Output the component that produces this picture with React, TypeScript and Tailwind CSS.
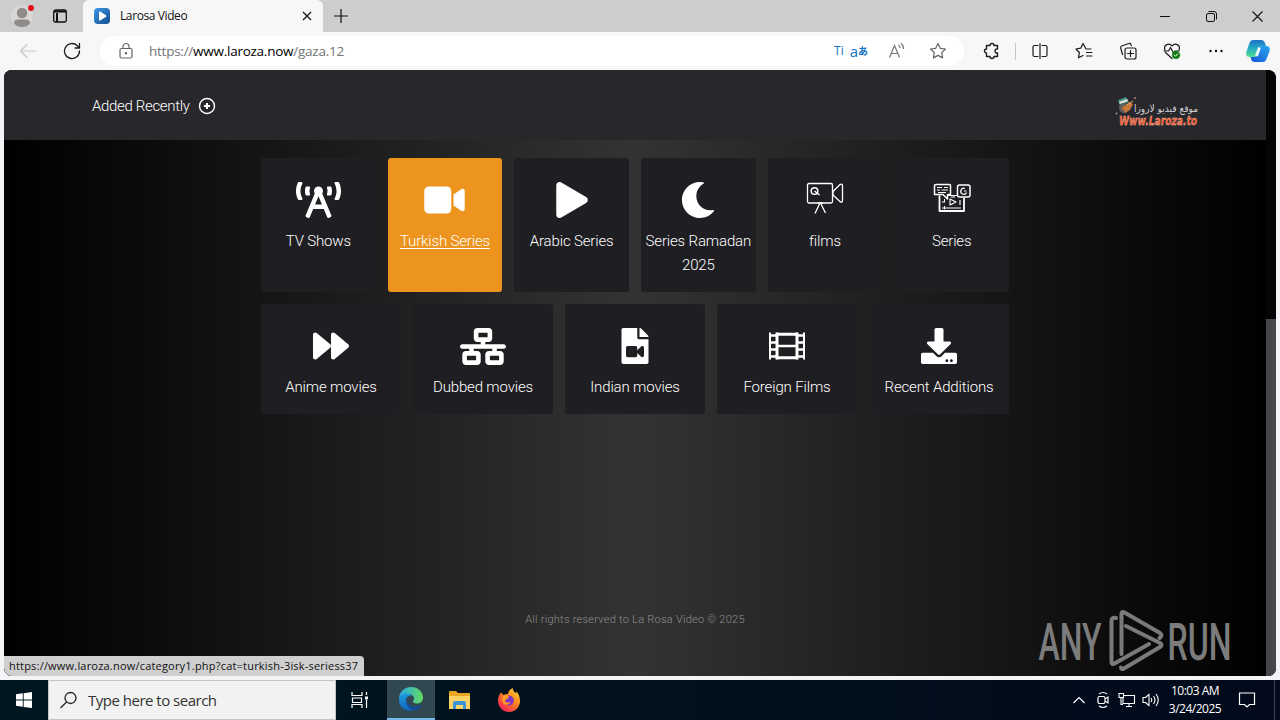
import React from 'react';
import {
  FaBroadcastTower,
  FaPlay,
  FaMoon,
  FaForward,
  FaDownload,
  FaFileVideo,
} from 'react-icons/fa';
import { FaVideo, FaNetworkWired } from 'react-icons/fa6';

interface Category {
  title: string;
  icon: React.ReactNode;
  active?: boolean;
}

const FilmsIcon: React.FC = () => (
  <svg width="38" height="36" viewBox="0 0 38 36" fill="none" stroke="white" strokeWidth="1.3" strokeLinejoin="round">
    <rect x="1.5" y="1.5" width="25" height="19.5" rx="1.5" />
    <path d="M27 9.5 34 2.5Q36.500 1.500 36.500 4V18Q36.500 21 34.500 20L27 13Z" />
    <circle cx="8.500" cy="9" r="3.300" strokeWidth="1.500" />
    <path d="m8.500 9 5 4" strokeWidth="1.500" />
    <path d="m13.500 22-4.500 9.500M15 22l4.500 9M12 21h5" />
  </svg>
);

const SeriesIcon: React.FC = () => (
  <svg width="38" height="36" viewBox="0 0 38 36" fill="none" stroke="white" strokeWidth="1.300" strokeLinejoin="round">
    <path d="M1.500 3.500Q1.500 2.500 3 2.500H16.500Q17.500 2.500 17.500 3.500V12.500H14.500V17L10 12.500H1.500Z" strokeWidth="1.500" />
    <path d="M4 5.500h5M11 5.500h4M4 8h3M8.500 8H15M5 10.500h8" strokeWidth="1" />
    <rect x="24.500" y="3" width="12.500" height="12" rx="2" strokeWidth="1.500" />
    <path d="M32 6.500a3 3 0 1 0 1.500 4M31 9h2.500" strokeWidth="1.200" />
    <path d="M6.500 13.500V29H31V16" strokeWidth="1.800" />
    <path d="M15 13.500h9M9 26h19M11.500 24v3.500M9 20h2.500V17M27 18v5M18 15h4" strokeWidth="1.100" />
    <path d="M17 17v6l6-3Z" strokeWidth="1.100" />
  </svg>
);

const FilmStripIcon: React.FC = () => (
  <svg width="36" height="36" viewBox="0 0 36 36" fill="none" stroke="white">
    <path d="M1 4.500v27M35 4.500v27" strokeWidth="2" />
    <path d="M8 4.500v27M28 4.500v27" strokeWidth="3" />
    <path d="M7 6.200h22M7 29.800h22" strokeWidth="3" />
    <path d="M8 18h20" strokeWidth="2.500" />
    <path d="M1 7.500h7M1 14.500h7M1 21.500h7M1 28.500h7M28 7.500h7M28 14.500h7M28 21.500h7M28 28.500h7" strokeWidth="2.300" />
  </svg>
);

const topRow: Category[] = [
  { title: 'TV Shows', icon: <FaBroadcastTower className="h-9 w-[45px]" /> },
  { title: 'Turkish Series', icon: <FaVideo className="h-9 w-[41px]" />, active: true },
  { title: 'Arabic Series', icon: <FaPlay /> },
  { title: 'Series Ramadan 2025', icon: <FaMoon /> },
  { title: 'films', icon: <FilmsIcon /> },
  { title: 'Series', icon: <SeriesIcon /> },
];

const bottomRow: Category[] = [
  { title: 'Anime movies', icon: <FaForward /> },
  { title: 'Dubbed movies', icon: <FaNetworkWired className="mt-px h-[37px] w-[46px]" /> },
  { title: 'Indian movies', icon: <FaFileVideo /> },
  { title: 'Foreign Films', icon: <FilmStripIcon /> },
  { title: 'Recent Additions', icon: <FaDownload /> },
];

const CategoryCard: React.FC<{ category: Category }> = ({ category }) => (
  <a
    className={`flex flex-col items-center rounded-[3px] pt-6 text-center text-white ${
      category.active ? 'bg-[#ed941e] underline underline-offset-2' : 'bg-[#1f1e22]'
    }`}
  >
    <div className="flex h-9 items-center justify-center text-[36px]">{category.icon}</div>
    <span className="mt-[11px] px-1 text-[15px] leading-6 font-light tracking-[-0.15px]">{category.title}</span>
  </a>
);

const TabBar: React.FC = () => (
  <div className="flex h-8 items-center bg-[#cdcdcd]">
    <div className="flex w-[83px] items-center">
      <div className="flex w-11 justify-center">
        <svg width="26" height="26" viewBox="0 0 26 26">
          <circle cx="13" cy="13" r="11" fill="#d9d7d5" />
          <circle cx="13" cy="10" r="5.200" fill="#8f8b88" />
          <path d="M5 20.500Q5 16.500 9 16.500h8q4 0 4 4-3 3.500-8 3.500t-8-3.500Z" fill="#8f8b88" />
          <circle cx="22" cy="5" r="3" fill="#e0101c" />
        </svg>
      </div>
      <div className="flex w-8 justify-center">
        <svg width="16" height="16" viewBox="0 0 16 16" fill="none" stroke="#111" strokeWidth="1.300">
          <rect x="1.700" y="2" width="12.600" height="12" rx="2" />
          <path d="M2 3.500h12M5 5v9" strokeWidth="2" />
        </svg>
      </div>
    </div>
    <div className="flex h-8 w-60 items-center rounded-t-md bg-[#f7f7f7] pr-2 pl-[11px]">
      <svg width="16" height="16" viewBox="0 0 16 16">
        <defs>
          <linearGradient id="fav" x1="0" y1="0" x2="1" y2="1">
            <stop offset="0" stopColor="#3d9ae8" />
            <stop offset="1" stopColor="#114b8f" />
          </linearGradient>
        </defs>
        <rect width="16" height="16" rx="4" fill="url(#fav)" />
        <path d="M5 4.300Q5 3 6.200 3.600L12 7.200q1 .8 0 1.600L6.200 12.400Q5 13 5 11.700Z" fill="white" />
      </svg>
      <span className="ml-[10px] flex-1 text-[12px] tracking-[-0.4px] text-[#111]">Larosa Video</span>
      <svg width="16" height="16" viewBox="0 0 16 16" stroke="#111" strokeWidth="1.200">
        <path d="m4 4 8 8M12 4l-8 8" />
      </svg>
    </div>
    <div className="flex w-9 justify-center">
      <svg width="14" height="14" viewBox="0 0 14 14" stroke="#111" strokeWidth="1.200">
        <path d="M7 0v14M0 7h14" />
      </svg>
    </div>
    <div className="ml-auto flex items-center">
      <div className="flex w-[46px] justify-center">
        <svg width="10" height="10" viewBox="0 0 10 10" stroke="#111"><path d="M0 5.500h10" /></svg>
      </div>
      <div className="flex w-[46px] justify-center">
        <svg width="11" height="11" viewBox="0 0 11 11" fill="none" stroke="#111">
          <rect x=".5" y="2.500" width="8" height="8" rx="1.500" />
          <path d="M2.500.5H8Q10.500.5 10.500 3v5.500" />
        </svg>
      </div>
      <div className="flex w-[46px] justify-center">
        <svg width="11" height="11" viewBox="0 0 11 11" stroke="#111" strokeWidth="1.100">
          <path d="m.5.5 10 10M10.500.5l-10 10" />
        </svg>
      </div>
    </div>
  </div>
);

const ToolIcon: React.FC<{ children: React.ReactNode }> = ({ children }) => (
  <div className="flex w-11 shrink-0 justify-center">
    <svg width="18" height="18" viewBox="0 0 18 18" fill="none" stroke="#1b1b1b" strokeWidth="1.200" strokeLinejoin="round" strokeLinecap="round">
      {children}
    </svg>
  </div>
);

const Toolbar: React.FC = () => (
  <div className="flex h-[38px] items-center bg-[#f7f7f7]">
    <div className="flex w-[100px] pl-[6px]">
      <ToolIcon>
        <path d="M16.500 9H1.500M8 2.500 1.500 9 8 15.500" stroke="#c8c8c8" />
      </ToolIcon>
      <ToolIcon>
        <path d="M16.500 9a7.500 7.500 0 1 1-2.200-5.300L16.500 6M16.500 1.500V6H12" strokeWidth="1.300" />
      </ToolIcon>
    </div>
    <div className="flex h-[30px] w-[864px] items-center rounded-full bg-white pr-[5px] pl-1">
      <ToolIcon>
        <g stroke="#666">
          <rect x="3" y="6.500" width="12" height="9.500" rx="1.500" />
          <path d="M6 6.500V4.500a3 3 0 0 1 6 0v2" />
          <circle cx="9" cy="11.200" r=".6" fill="#666" />
        </g>
      </ToolIcon>
      <span className="ml-[1px] flex-1 text-[13.5px] leading-5 tracking-[-0.25px] text-[#737373]">
        https://<span className="text-black">www.laroza.now</span>/gaza.12
      </span>
      <div className="mr-[9px] flex items-center gap-[6px] text-[#1272c4]">
        <span className="text-[12px]">Ti</span>
        <span className="flex items-center text-[15px] leading-4">
          a<span className="text-[10px] font-bold">あ</span>
        </span>
      </div>
      <div className="flex w-10 justify-center">
        <svg width="18" height="18" viewBox="0 0 18 18" fill="none" stroke="#777" strokeWidth="1.200">
          <path d="m1.500 15.500 5-12 5 12M3.200 11.500h6.600M10.500 3q1.500 1 1.500 3M13 1.500q2.800 2 2.500 5.500" />
        </svg>
      </div>
      <div className="flex w-[42px] justify-center">
        <svg width="18" height="18" viewBox="0 0 18 18" fill="none" stroke="#666" strokeWidth="1.200" strokeLinejoin="round">
          <path d="m9 1.500 2.300 4.800 5.200.7-3.800 3.600.9 5.300L9 13.400l-4.600 2.500.9-5.300L1.500 7l5.200-.7Z" />
        </svg>
      </div>
    </div>
    <div className="flex flex-1 items-center pl-[6px]">
      <ToolIcon>
        <path d="M3.500 3.500H7a2 2 0 0 1 4 0h3.500V7q-2.500-.2-2.500 2t2.500 2v3.500H11a2 2 0 0 1-4 0H3.500V11a2 2 0 1 1 0-4Z" strokeWidth="1.400" />
      </ToolIcon>
      <div className="ml-px h-[17px] w-px bg-[#c4c4c4]" />
      <div className="ml-[2px] flex">
        <ToolIcon>
          <path d="M7 3.500H3.500Q2 3.500 2 5v8q0 1.500 1.500 1.500H7M11 3.500h3.500Q16 3.500 16 5v8q0 1.500-1.500 1.500H11M9 1.500v15" />
        </ToolIcon>
        <ToolIcon>
          <path d="M16 7H11L8 1.500 5.700 6.200.9 7l3.500 3.500-.9 5.300L8 13.500M11.500 10.500H17M11.500 14H17" />
        </ToolIcon>
        <ToolIcon>
          <rect x="6" y="6" width="11" height="11" rx="2" />
          <path d="M11.500 8.500v6M8.500 11.500h6M3.500 12.500 1.700 6q-.3-1.500 1-2L10 1.500q1.500-.3 2 1l.3 1.200" />
        </ToolIcon>
        <ToolIcon>
          <path d="M2 8C0 3 6 0 9 4c3-4 9-1 7 4M2.500 10.500 9 16.500M1 9h4.500L7.500 5.500l3 5.500 1.500-2h4" />
          <circle cx="13" cy="13" r="3.800" fill="#107c10" stroke="#107c10" strokeWidth=".5" />
          <path d="m11.200 13 1.300 1.300 2.300-2.500" stroke="white" strokeWidth="1" />
        </ToolIcon>
        <ToolIcon>
          <g fill="#111" stroke="none">
            <circle cx="3.500" cy="9" r="1.200" /><circle cx="9" cy="9" r="1.200" /><circle cx="14.500" cy="9" r="1.200" />
          </g>
        </ToolIcon>
      </div>
      <svg className="ml-[7px] shrink-0" width="26" height="24" viewBox="0 0 26 24">
        <defs>
          <linearGradient id="cpa" x1="0" y1="0" x2="0" y2="1">
            <stop offset="0" stopColor="#1f72c9" />
            <stop offset=".45" stopColor="#22a6c4" />
            <stop offset="1" stopColor="#52e08d" />
          </linearGradient>
          <linearGradient id="cpb" x1="1" y1="0" x2="0" y2="1">
            <stop offset="0" stopColor="#2aa9ea" />
            <stop offset="1" stopColor="#1652d8" />
          </linearGradient>
        </defs>
        <path d="M8 1h8.500q2.500 0 3.300 2.500L21 7h-4q-2 0-2.600 2l-2 6.500q-.8 2.500-3.400 2.500H5Q0 18 1.500 12.500L4.500 4Q5.500 1 8 1Z" fill="url(#cpa)" />
        <path d="M18 23H9.500Q7 23 6.200 20.500L5.500 18H9q2.600 0 3.400-2.500l2-6.500Q15 7 17 7h4q5 0 3.500 5.500l-3 7.500q-1 3-3.500 3Z" fill="url(#cpb)" />
        <path d="M14.500 8.500 11.500 17" stroke="#e7f7ff" strokeWidth="3" />
      </svg>
    </div>
  </div>
);

const SiteLogo: React.FC = () => (
  <svg className="overflow-visible" width="88" height="36" viewBox="0 0 88 36">
    <path d="M4 5 12 2l3 5-9 4Z" fill="#3d8f82" />
    <path d="m5 7 8-3 1 2-8 3Z" fill="#e5e2da" />
    <circle cx="10" cy="13" r="5" fill="#5b6062" />
    <circle cx="10" cy="13" r="2.500" fill="#9c6a42" />
    <path d="m9 13 6-6 4 2-3 6-5 3Z" fill="#c7783a" />
    <path d="m13 10 6-4" stroke="#f0b067" />
    <circle cx="2.500" cy="18.500" r="1" fill="#8ba0a4" />
    <circle cx="21" cy="3" r="1" fill="#b4847a" />
    <text x="84" y="17" textAnchor="end" textLength="64" lengthAdjust="spacingAndGlyphs" fontSize="10" fill="#d4d4d6" fontFamily="DejaVu Sans, sans-serif">
      موقع فيديو لاروزا
    </text>
    <text x="5" y="30" textLength="78" lengthAdjust="spacingAndGlyphs" fontSize="12" fontWeight="bold" fontStyle="italic" fill="#f4572c" stroke="#f6c6b2" strokeWidth=".35" fontFamily="DejaVu Sans, sans-serif">
      Www.Laroza.to
    </text>
  </svg>
);

const Watermark: React.FC = () => (
  <svg className="absolute top-[538px] left-[1034px] overflow-visible" width="196" height="66" viewBox="0 0 196 66" fill="none">
    <g fill="#7c7c7c" fontFamily="Roboto, sans-serif" fontSize="52" fontWeight="500">
      <text x="0.500" y="51.500" textLength="63" lengthAdjust="spacingAndGlyphs">ANY</text>
      <text x="129.500" y="51.500" textLength="64" lengthAdjust="spacingAndGlyphs">RUN</text>
    </g>
    <g stroke="#7a7a7a" strokeWidth="4" strokeLinecap="round" strokeLinejoin="round">
      <path d="M78 10q-4.500-1-4.500 3V54q0 3 3 1.500L111 36" />
      <path d="M83.500 46V6q0-3 3-1.500L122 25q3 2.500-.5 5" />
      <path d="m88 18 34 17q3 2 0 4L86 60.500q-2.500 1.500-3-1" />
    </g>
  </svg>
);

const SitePage: React.FC = () => (
  <div className="relative flex h-[606px] overflow-hidden rounded-lg bg-black">
    <div className="flex flex-1 flex-col bg-linear-to-r/srgb from-black via-[#333333] to-black font-['Roboto','Liberation_Sans',sans-serif]">
      <header className="flex h-[70px] items-center justify-between bg-[#28272c] pr-[64px] pl-[88px] text-white">
        <a className="mt-[2px] flex items-center gap-2 text-[15px] font-light">
          <span className="tracking-[-0.33px]">Added Recently</span>
          <svg className="-mt-px" width="18" height="18" viewBox="0 0 18 18" fill="none" stroke="white" strokeWidth="1.400">
            <circle cx="9" cy="9" r="7.500" />
            <path d="M9 6v6M6 9h6" strokeWidth="2" />
          </svg>
        </a>
        <div className="mt-[15px]">
          <SiteLogo />
        </div>
      </header>
      <main className="mx-auto mt-[18px] flex w-[748px] flex-col gap-3">
        <div className="grid h-[134px] grid-cols-6 gap-3">
          {topRow.map((category) => (
            <CategoryCard key={category.title} category={category} />
          ))}
        </div>
        <div className="grid h-[110px] grid-cols-5 gap-3">
          {bottomRow.map((category) => (
            <CategoryCard key={category.title} category={category} />
          ))}
        </div>
      </main>
      <footer className="mt-auto mb-[47px] text-center text-[11px] leading-[18px] font-light tracking-[0.26px] text-[#8f8f8f]">
        All rights reserved to La Rosa Video © 2025
      </footer>
    </div>
    {/* Scrollbar */}
    <div className="flex w-[10px] flex-col justify-end bg-[#050505]">
      <div className="h-[357px] bg-[#46454c]" />
    </div>
    <div className="absolute bottom-0 left-0 h-5 w-[360px] rounded-tr-[4px] bg-[#cfcfcf] pl-[5px] text-[11px] leading-5 tracking-[0.2px] whitespace-nowrap text-[#111]">
      https://www.laroza.now/category1.php?cat=turkish-3isk-seriess37
    </div>
    <Watermark />
  </div>
);

const Taskbar: React.FC = () => (
  <div className="flex h-10 items-center bg-linear-to-r from-[#00171f] to-[#020a1b] text-white">
    <div className="flex w-12 justify-center">
      <svg width="16" height="16" viewBox="0 0 16 16" fill="white">
        <path d="m0 2.300 6.800-1v6.300H0ZM7.700 1.200 16 0v7.600H7.700ZM0 8.500h6.800v6.300L0 13.800ZM7.700 8.500H16V16l-8.300-1.100Z" />
      </svg>
    </div>
    <div className="flex h-10 w-72 items-center border border-[#c5c5c5] bg-[#f2f2f2] pl-[11px] text-[#333]">
      <svg width="18" height="18" viewBox="0 0 18 18" fill="none" stroke="#222" strokeWidth="1.300">
        <circle cx="10.500" cy="7" r="5.500" />
        <path d="m6.500 11-6 6" />
      </svg>
      <span className="ml-[10px] text-[15px] tracking-[-0.5px]">Type here to search</span>
    </div>
    <div className="flex w-[51px] justify-center pr-[3px]">
      <svg width="18" height="18" viewBox="0 0 18 18" fill="none" stroke="white" strokeWidth="1.200">
        <path d="M1 1v3.500h10V1M1 17v-3.500h10V17M1.500 7h9v4.500h-9ZM15.500 1v3M15.500 9v8" />
        <path d="M14 5.500h3v3h-3Z" fill="white" stroke="none" />
      </svg>
    </div>
    <div className="flex h-10 w-12 items-center justify-center border-b-2 border-[#76b9ed] bg-[#324851]">
      <svg width="24" height="24" viewBox="0 0 24 24">
        <defs>
          <linearGradient id="edga" x1="0" y1="0" x2="1" y2="0">
            <stop offset="0" stopColor="#2aa6e4" />
            <stop offset="1" stopColor="#62dc61" />
          </linearGradient>
          <linearGradient id="edgb" x1="0" y1="0" x2="0" y2="1">
            <stop offset="0" stopColor="#1b9de2" />
            <stop offset="1" stopColor="#1462b8" />
          </linearGradient>
        </defs>
        <path d="M0 12C0 5 5 0 12 0s12 5 12 10.500c0 4-3 6-6 6s-5-1.500-3.500-3c2-3-1-6.500-5-6.500C5 7 1 9 0 12Z" fill="url(#edga)" />
        <path d="M0 12c0-3 4-5.500 8-5.500 2 0 4 .7 5 2-4-.5-6 2-6 5 0 5 5 8.500 10 7.500Q14.500 24 12 24 0 23.500 0 12Z" fill="url(#edgb)" />
        <path d="M9.500 11c-3 4 1 9 7 8.500 2.500-.2 4-1 5.200-1.800q1 .3.300 1.300-2 3-5.500 4.200C10 24.500 5 17 9.500 11Z" fill="#124f98" />
      </svg>
    </div>
    <div className="flex w-[49px] justify-center">
      <svg width="22" height="20" viewBox="0 0 22 20">
        <path d="M0 2q0-1 1-1h6l2 2h11q1 0 1 1v14H0Z" fill="#e9a824" />
        <path d="M0 6h21v13H0Z" fill="#fcd364" />
        <path d="M4 19v-6q0-2 2-2h9q2 0 2 2v6h-3v-4H7v4Z" fill="#3a94d8" />
      </svg>
    </div>
    <div className="flex w-[49px] justify-center">
      <svg width="24" height="24" viewBox="0 0 24 24">
        <defs>
          <linearGradient id="ff" x1="1" y1="0" x2=".2" y2="1">
            <stop offset="0" stopColor="#ffe33d" />
            <stop offset=".45" stopColor="#ff8a1e" />
            <stop offset="1" stopColor="#f5195a" />
          </linearGradient>
        </defs>
        <path d="M4 4.500 6.500 7Q9 5.500 11 6q.5-4 4.500-6 .5 3 3 5 1-.5 1-1.500 3.500 4 3.500 9.500A11 11 0 0 1 1 13Q1 8 4 4.500Z" fill="url(#ff)" />
        <circle cx="11.800" cy="12.500" r="5" fill="#7b36c8" />
        <path d="M5.500 8q3-2 6.500 0l-1 2.500q-3 1-3 3 2 2 6 0-2 4-6 3-4-2-2.500-8.500Z" fill="#ff9a22" />
      </svg>
    </div>
    <div className="ml-auto flex items-center">
      <div className="flex w-6 justify-center">
        <svg width="12" height="8" viewBox="0 0 12 8" fill="none" stroke="white" strokeWidth="1.200"><path d="m.5 7 5.500-5.500L11.500 7" /></svg>
      </div>
      <div className="flex w-6 justify-center">
        <svg width="14" height="18" viewBox="0 0 14 18" fill="none" stroke="white" strokeWidth="1.200">
          <rect x="2" y="5.500" width="7" height="7" rx="1.500" />
          <path d="m9 8 3-2v6l-3-2M3 3q4-3 8 0M3 15q4 3 8 0" />
        </svg>
      </div>
      <div className="flex w-6 justify-center">
        <svg width="18" height="16" viewBox="0 0 18 16" fill="none" stroke="white" strokeWidth="1.100">
          <path d="M5 3.500h11.500v8H5V6M8 14.500h6M11 11.500v3M1 1.500h4.500v4H1ZM3 5.500v7h2" />
        </svg>
      </div>
      <div className="flex w-6 justify-center">
        <svg width="18" height="16" viewBox="0 0 18 16" fill="none" stroke="white" strokeWidth="1.100">
          <path d="M1 5.500h2.500L7 2.500v11L3.500 10.500H1ZM9 6q1.500 2 0 4M11.500 4q3 4 0 8M14 2q4.500 6 0 12" />
        </svg>
      </div>
      <div className="ml-[2px] w-[60px] text-center text-[12px] leading-[18px] tracking-[-0.5px] whitespace-nowrap">
        <div>10:03 AM</div>
        <div>3/24/2025</div>
      </div>
      <div className="flex w-11 items-center justify-center">
        <svg width="18" height="18" viewBox="0 0 18 18" fill="none" stroke="white" strokeWidth="1.200">
          <path d="M1.500 2h15v11.500h-5L9 16l-2.500-2.500h-5Z" />
        </svg>
      </div>
      <div className="ml-[5px] h-10 w-[6px] border-l border-[#3d4553]" />
    </div>
  </div>
);

const App: React.FC = () => (
  <div className="flex h-[720px] w-[1280px] flex-col overflow-hidden bg-[#f3f4f8] font-['Open_Sans','Noto_Sans_CJK_JP',sans-serif]">
    <TabBar />
    <Toolbar />
    <div className="px-1 pb-1">
      <SitePage />
    </div>
    <Taskbar />
  </div>
);

export default App;
